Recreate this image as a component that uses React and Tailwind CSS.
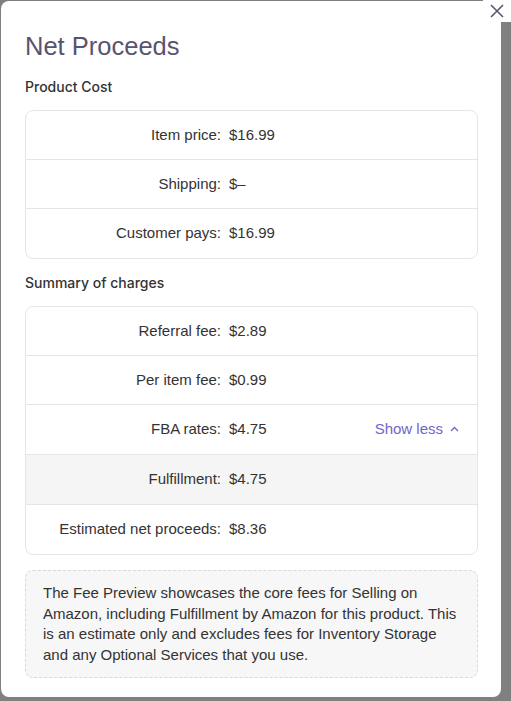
import React from "react";

function Row({ label, value, right, gray, h = "h-[49px]" }) {
  return (
    <div className={`flex items-center ${h} ${gray ? "bg-[#f5f5f5]" : ""}`}>
      <div className="w-[195px] text-right text-[#333333]">{label}</div>
      <div className="ml-2 text-[#333333]">{value}</div>
      {right ? <div className="ml-auto pr-[17px]">{right}</div> : null}
    </div>
  );
}

export default function App() {
  return (
    <div
      className="relative h-[701px] w-[511px] overflow-hidden bg-[#808080]"
      style={{ fontFamily: '"Liberation Sans", Arial, sans-serif' }}
    >
      <div className="ml-[1px] mt-[1px] h-[696px] w-[500px] rounded-lg bg-white pl-[24px] pr-[23px]">
        <h1 className="pt-[30px] text-[25.5px] leading-[30px] text-[#585470]">Net Proceeds</h1>
        <div className="mt-[16px] font-['Inter',sans-serif] text-[14px] font-medium leading-[20px] text-[#333333]">Product Cost</div>
        <div className="mt-[13px] divide-y divide-[#e6e6e6] overflow-hidden rounded-lg border border-[#e6e6e6] text-[15px]">
          <Row label="Item price:" value="$16.99" />
          <Row label="Shipping:" value="$–" />
          <Row label="Customer pays:" value="$16.99" />
        </div>
        <div className="mt-[14px] font-['Inter',sans-serif] text-[14px] font-medium leading-[20px] text-[#333333]">Summary of charges</div>
        <div className="mt-[13px] divide-y divide-[#e6e6e6] overflow-hidden rounded-lg border border-[#e6e6e6] text-[15px]">
          <Row label="Referral fee:" value="$2.89" />
          <Row label="Per item fee:" value="$0.99" />
          <Row
            label="FBA rates:"
            value="$4.75"
            h="h-[50px]"
            right={
              <span className="flex items-center gap-[6px] text-[#6f66cc]">
                Show less
                <svg width="11" height="11" viewBox="0 0 11 11" fill="none" stroke="currentColor" strokeWidth="1.3">
                  <path d="M2 7 L5.5 3.5 L9 7" />
                </svg>
              </span>
            }
          />
          <Row label="Fulfillment:" value="$4.75" gray h="h-[50px]" />
          <Row label="Estimated net proceeds:" value="$8.36" />
        </div>
        <div className="mt-[15px] rounded-lg border border-dashed border-[#d9d9d9] bg-[#f7f7f7] pb-[11px] pl-[17px] pr-[15px] pt-[12px] text-[15px] leading-[20.7px] text-[#333333]">
          The Fee Preview showcases the core fees for Selling on Amazon, including Fulfillment by Amazon for this product. This is an estimate only and excludes fees for Inventory Storage and any Optional Services that you use.
        </div>
      </div>
      <button className="absolute right-0 top-0 flex h-[22px] w-[28px] items-center justify-center bg-white text-[#5a5570]">
        <svg width="16" height="16" viewBox="0 0 16 16" fill="none" stroke="currentColor" strokeWidth="1.6">
          <path d="M2 2 L14 14 M14 2 L2 14" />
        </svg>
      </button>
    </div>
  );
}
